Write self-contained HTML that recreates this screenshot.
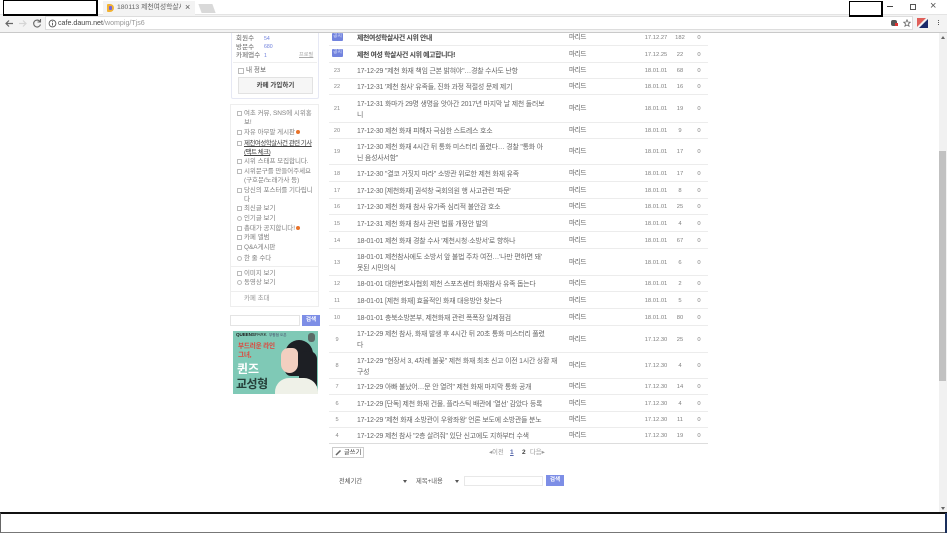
<!DOCTYPE html>
<html><head><meta charset="utf-8"><style>
html,body{margin:0;padding:0;background:#fff;width:947px;height:533px;overflow:hidden}
body{position:relative;font-family:"Liberation Sans","Noto Sans CJK KR",sans-serif;font-size:7px;color:#555}
.a{position:absolute;white-space:nowrap}
#w{position:absolute;left:0;top:0;width:947px;height:533px;filter:blur(.3px)}
.r{position:absolute;left:329px;width:379px;box-sizing:border-box;border-bottom:1px solid #ececec;display:flex;align-items:center;white-space:nowrap;color:#666}
.r span{display:block;flex:none;line-height:11px;position:relative;top:1px}
.r .no{width:16px;text-align:center;font-size:5.6px;color:#888}
.r .ti{margin-left:12px;width:205px;font-size:6.9px;letter-spacing:-.17px;color:#666}
.r .ti.b{font-weight:bold;letter-spacing:-.35px;color:#444;margin-left:28px}
.r .au{margin-left:7px;width:24px;font-size:6.6px;letter-spacing:-.4px;color:#666;top:0}
.r .da{margin-left:48px;width:30px;text-align:center;font-size:5.8px;color:#808080}
.r .vi{width:18px;text-align:center;font-size:5.8px;color:#808080}
.r .ze{width:20px;text-align:center;font-size:5.8px;color:#808080}
.m{position:absolute;left:244px;font-size:6.5px;line-height:9px;color:#808080;white-space:nowrap;letter-spacing:-.05px}
.m i{position:absolute;left:-7px;top:2px;width:3px;height:3px;border:1px solid #bbb;display:block}
.d{display:inline-block;width:4px;height:4px;background:#e8732a;border-radius:2px;margin-left:1px}
.n{position:absolute;left:332px;width:11px;height:8px;background:#7283de;color:#dfe4fb;font-size:4.8px;line-height:8px;text-align:center;border-radius:1px}
.k{position:absolute;left:236px;font-size:6.5px;line-height:9px;color:#666;letter-spacing:.1px}
.v{position:absolute;left:264px;font-size:5.2px;line-height:8px;color:#6f80dc}
</style></head><body>
<div id="w">

<div class="r" style="top:30px;height:16px"><span class="ti b">제천여성학살사건 시위 안내</span><span class="au">마리드</span><span class="da">17.12.27</span><span class="vi">182</span><span class="ze">0</span></div>
<div class="r" style="top:46px;height:17px"><span class="ti b">제천 여성 학살사건 시위 예고합니다!</span><span class="au">마리드</span><span class="da">17.12.25</span><span class="vi">22</span><span class="ze">0</span></div>
<div class="r" style="top:63px;height:16px"><span class="no">23</span><span class="ti">17-12-29 "제천 화재 책임 근본 밝혀야"…경찰 수사도 난항</span><span class="au">마리드</span><span class="da">18.01.01</span><span class="vi">68</span><span class="ze">0</span></div>
<div class="r" style="top:79px;height:16px"><span class="no">22</span><span class="ti">17-12-31 '제천 참사' 유족들, 진화 과정 적절성 문제 제기</span><span class="au">마리드</span><span class="da">18.01.01</span><span class="vi">16</span><span class="ze">0</span></div>
<div class="r" style="top:95px;height:28px"><span class="no">21</span><span class="ti">17-12-31 화마가 29명 생명을 앗아간 2017년 마지막 날 제천 둘러보<br>니</span><span class="au">마리드</span><span class="da">18.01.01</span><span class="vi">19</span><span class="ze">0</span></div>
<div class="r" style="top:123px;height:16px"><span class="no">20</span><span class="ti">17-12-30 제천 화재 피해자 극심한 스트레스 호소</span><span class="au">마리드</span><span class="da">18.01.01</span><span class="vi">9</span><span class="ze">0</span></div>
<div class="r" style="top:139px;height:26px"><span class="no">19</span><span class="ti">17-12-30 제천 화재 4시간 뒤 통화 미스터리 풀렸다… 경찰 "통화 아<br>닌 음성사서함"</span><span class="au">마리드</span><span class="da">18.01.01</span><span class="vi">17</span><span class="ze">0</span></div>
<div class="r" style="top:165px;height:17px"><span class="no">18</span><span class="ti">17-12-30 "결코 거짓지 마라" 소방관 위로한 제천 화재 유족</span><span class="au">마리드</span><span class="da">18.01.01</span><span class="vi">17</span><span class="ze">0</span></div>
<div class="r" style="top:182px;height:17px"><span class="no">17</span><span class="ti">17-12-30 [제천화재] 권석창 국회의원 행 사고관련 '파문'</span><span class="au">마리드</span><span class="da">18.01.01</span><span class="vi">8</span><span class="ze">0</span></div>
<div class="r" style="top:199px;height:16px"><span class="no">16</span><span class="ti">17-12-30 제천 화재 참사 유가족 심리적 불안감 호소</span><span class="au">마리드</span><span class="da">18.01.01</span><span class="vi">25</span><span class="ze">0</span></div>
<div class="r" style="top:215px;height:17px"><span class="no">15</span><span class="ti">17-12-31 제천 화재 참사 관련 법률 개정안 발의</span><span class="au">마리드</span><span class="da">18.01.01</span><span class="vi">4</span><span class="ze">0</span></div>
<div class="r" style="top:232px;height:17px"><span class="no">14</span><span class="ti">18-01-01 제천 화재 경찰 수사 '제천시청·소방서'로 향하나</span><span class="au">마리드</span><span class="da">18.01.01</span><span class="vi">67</span><span class="ze">0</span></div>
<div class="r" style="top:249px;height:27px"><span class="no">13</span><span class="ti">18-01-01 제천참사에도 소방서 앞 불법 주차 여전…'나만 편하면 돼'<br>못된 시민의식</span><span class="au">마리드</span><span class="da">18.01.01</span><span class="vi">6</span><span class="ze">0</span></div>
<div class="r" style="top:276px;height:16px"><span class="no">12</span><span class="ti">18-01-01 대한변호사협회 제천 스포츠센터 화재참사 유족 돕는다</span><span class="au">마리드</span><span class="da">18.01.01</span><span class="vi">2</span><span class="ze">0</span></div>
<div class="r" style="top:292px;height:17px"><span class="no">11</span><span class="ti">18-01-01 [제천 화재] 효율적인 화재 대응방안 찾는다</span><span class="au">마리드</span><span class="da">18.01.01</span><span class="vi">5</span><span class="ze">0</span></div>
<div class="r" style="top:309px;height:17px"><span class="no">10</span><span class="ti">18-01-01 충북소방본부, 제천화재 관련 폭폭장 일제점검</span><span class="au">마리드</span><span class="da">18.01.01</span><span class="vi">80</span><span class="ze">0</span></div>
<div class="r" style="top:326px;height:27px"><span class="no">9</span><span class="ti">17-12-29 제천 참사, 화재 발생 후 4시간 뒤 20초 통화 미스터리 풀렸<br>다</span><span class="au">마리드</span><span class="da">17.12.30</span><span class="vi">25</span><span class="ze">0</span></div>
<div class="r" style="top:353px;height:26px"><span class="no">8</span><span class="ti">17-12-29 "현장서 3, 4차례 불꽃" 제천 화재 최초 신고 이전 1시간 상황 재<br>구성</span><span class="au">마리드</span><span class="da">17.12.30</span><span class="vi">4</span><span class="ze">0</span></div>
<div class="r" style="top:379px;height:16px"><span class="no">7</span><span class="ti">17-12-29 아빠 불났어…문 안 열려" 제천 화재 마지막 통화 공개</span><span class="au">마리드</span><span class="da">17.12.30</span><span class="vi">14</span><span class="ze">0</span></div>
<div class="r" style="top:395px;height:17px"><span class="no">6</span><span class="ti">17-12-29 [단독] 제천 화재 건물, 플라스틱 배관에 '열선' 감았다 등록</span><span class="au">마리드</span><span class="da">17.12.30</span><span class="vi">4</span><span class="ze">0</span></div>
<div class="r" style="top:412px;height:16px"><span class="no">5</span><span class="ti">17-12-29 '제천 화재 소방관이 우왕좌왕' 언론 보도에 소방관들 분노</span><span class="au">마리드</span><span class="da">17.12.30</span><span class="vi">11</span><span class="ze">0</span></div>
<div class="r" style="top:428px;height:16px;border-bottom-color:#ddd"><span class="no">4</span><span class="ti">17-12-29 제천 참사 "2층 살려줘" 있단 신고에도 지하부터 수색</span><span class="au">마리드</span><span class="da">17.12.30</span><span class="vi">19</span><span class="ze">0</span></div>
<div class="n" style="top:33px">공지</div>
<div class="n" style="top:49px">공지</div>

<div class="a" style="left:0;top:0;width:947px;height:15px;background:#fff"></div>
<div class="a" style="left:0;top:14px;width:947px;height:18px;background:#f3f3f3;border-top:1px solid #e4e4e4;box-sizing:border-box"></div>
<div class="a" style="left:0;top:32px;width:947px;height:1px;background:#c9c9c9"></div>
<div class="a" style="left:103px;top:1px;width:92px;height:14px;background:#f3f3f3"></div>
<div class="a" style="left:107px;top:4px;width:7px;height:8px;background:#f2b233;border-radius:1px 4px 4px 1px"></div>
<div class="a" style="left:109px;top:6px;width:3px;height:4px;background:#7466d8;border-radius:1px"></div>
<div class="a" style="left:117px;top:3px;font-size:6.8px;line-height:9px;color:#666;width:64px;overflow:hidden">180113 제천여성학살사</div>
<div class="a" style="left:185px;top:2px;font-size:9px;line-height:11px;color:#555">×</div>
<div class="a" style="left:200px;top:4px;width:14px;height:9px;background:#d9d9d9;transform:skewX(20deg)"></div>
<div class="a" style="left:887px;top:6px;width:6px;height:1px;background:#444"></div>
<div class="a" style="left:910px;top:4px;width:4px;height:4px;border:1px solid #555;background:#fff"></div>
<div class="a" style="left:930px;top:0px;font-size:11px;line-height:12px;color:#555">×</div>

<svg class="a" style="left:4px;top:17px" width="24" height="13" viewBox="0 0 24 13"><path d="M9 6.500H2M5 3.500L2 6.500L5 9.500" fill="none" stroke="#666" stroke-width="1.200"/><path d="M15 6.500H22M19 3.500L22 6.500L19 9.500" fill="none" stroke="#d5d5d5" stroke-width="1.200"/></svg>
<svg class="a" style="left:32px;top:18px" width="10" height="11" viewBox="0 0 10 11"><path d="M8 3.500A3.500 3.500 0 1 0 8.500 6.500M8.500 1V4H5.500" fill="none" stroke="#666" stroke-width="1.100"/></svg>
<div class="a" style="left:45px;top:16px;width:868px;height:14px;background:#fff;border:1px solid #ddd;box-sizing:border-box"></div>
<svg class="a" style="left:48px;top:19px" width="9" height="9" viewBox="0 0 9 9"><circle cx="4.500" cy="4.500" r="3.400" fill="none" stroke="#555" stroke-width=".9"/><path d="M4.500 4V6.500M4.500 2.200V3.200" stroke="#555" stroke-width=".9"/></svg>
<div class="a" style="left:58px;top:19px;font-size:7.1px;line-height:9px;color:#999"><span style="color:#444">cafe.daum.net</span>/wompig/Tjs6</div>
<div class="a" style="left:891px;top:20px;width:6px;height:6px;background:#555;border-radius:2px"></div>
<div class="a" style="left:895px;top:23px;width:3px;height:3px;background:#d33"></div>
<svg class="a" style="left:903px;top:19px" width="8" height="8" viewBox="0 0 10 10"><path d="M5 1L6.200 3.800L9.200 4L6.900 6L7.600 9L5 7.400L2.400 9L3.100 6L.8 4L3.800 3.800Z" fill="none" stroke="#666" stroke-width="1"/></svg>
<svg class="a" style="left:917px;top:18px" width="11" height="10" viewBox="0 0 11 10"><rect width="11" height="10" fill="#f4f4f4"/><path d="M0 0H9L0 9Z" fill="#e0605a"/><path d="M11 1V10H2Z" fill="#1b2a6b"/></svg>
<div class="a" style="left:938px;top:20px;width:1px;height:1px;background:#555;box-shadow:0 2px #555,0 4px #555"></div>

<div class="a" style="left:939px;top:33px;width:8px;height:479px;background:#f1f1f1"></div>
<div class="a" style="left:939px;top:151px;width:7px;height:230px;background:#c1c1c1"></div>
<div class="a" style="left:941px;top:36px;width:0;height:0;border:2px solid transparent;border-bottom:3px solid #666;border-top:0"></div>
<div class="a" style="left:941px;top:507px;width:0;height:0;border:2px solid transparent;border-top:3px solid #666;border-bottom:0"></div>

<div class="a" style="left:231px;top:33px;width:88px;height:66px;box-sizing:border-box;border:1px solid #e6e8f4;border-top:0;border-radius:0 0 2px 2px"></div>
<div class="k" style="top:33.500px">회원수</div><div class="v" style="top:35px">54</div>
<div class="k" style="top:42.500px">방문수</div><div class="v" style="top:43px">680</div>
<div class="k" style="top:50.500px">카페앱수</div><div class="v" style="top:52px">1</div>
<div class="a" style="left:299px;top:51px;font-size:5.2px;line-height:8px;color:#aaa;text-decoration:underline">프로필</div>
<div class="a" style="left:233px;top:62px;width:84px;height:1px;background:#eee"></div>
<div class="a" style="left:238px;top:68px;width:4px;height:4px;border:1px solid #bbb"></div>
<div class="a" style="left:246px;top:66px;font-size:6.6px;line-height:9px;color:#666">내 정보</div>
<div class="a" style="left:238px;top:77px;width:75px;height:17px;box-sizing:border-box;background:#f6f6f6;border:1px solid #e2e2e2;text-align:center;font-size:6.5px;font-weight:bold;line-height:15px;color:#444">카페 가입하기</div>

<div class="a" style="left:230px;top:104px;width:89px;height:203px;box-sizing:border-box;border:1px solid #eee"></div>
<div class="m" style="top:109px"><i></i>여초 커뮤, SNS에 시위홍<br>보!</div>
<div class="m" style="top:128px"><i></i>자유 아무말 게시판<b class="d"></b></div>
<div class="m" style="top:139px;color:#444;text-decoration:underline;letter-spacing:-.55px"><i></i>제천여성학살사건 관련 기사<br>(팩트 체크)</div>
<div class="m" style="top:157px"><i></i>시위 스태프 모집합니다.</div>
<div class="m" style="top:167px"><i></i>시위문구를 만들어주세요<br>(구호문/노래가사 등)</div>
<div class="m" style="top:186px"><i></i>당신의 포스터를 기다립니<br>다</div>
<div class="m" style="top:204px"><i></i>최신글 보기</div>
<div class="m" style="top:214px"><i style="border-radius:3px"></i>인기글 보기</div>
<div class="m" style="top:224px"><i></i>총대가 공지합니다!<b class="d"></b></div>
<div class="m" style="top:233px"><i></i>카페 앨범</div>
<div class="m" style="top:243px"><i></i>Q&amp;A게시판</div>
<div class="m" style="top:254px"><i style="border-radius:3px"></i>한 줄 수다</div>
<div class="a" style="left:231px;top:266px;width:87px;height:1px;background:#eee"></div>
<div class="m" style="top:269px"><i></i>이미지 보기</div>
<div class="m" style="top:278px"><i style="border-radius:3px"></i>동영상 보기</div>
<div class="a" style="left:231px;top:291px;width:87px;height:1px;background:#eee"></div>
<div class="m" style="top:294px;color:#999">카페 초대</div>

<div class="a" style="left:230px;top:315px;width:70px;height:11px;box-sizing:border-box;border:1px solid #e4e4e4"></div>
<div class="a" style="left:302px;top:315px;width:18px;height:11px;background:#7d8ee6;color:#fff;font-size:5.6px;line-height:11px;text-align:center;font-weight:bold">검색</div>

<div class="a" style="left:233px;top:331px;width:85px;height:63px;background:#7fc9b6;overflow:hidden">
<div class="a" style="left:3px;top:0px;font-size:4.6px;line-height:8px;font-weight:bold;color:#222;letter-spacing:-.1px">QUEENS<span style="font-weight:normal">PARK</span></div>
<div class="a" style="left:36px;top:1px;font-size:3.6px;line-height:6px;color:#446">부평점 오픈</div>
<div class="a" style="left:5px;top:11px;font-size:6.6px;line-height:9px;font-weight:bold;color:#e0443a;letter-spacing:-.2px">부드러운 라인<br>그녀,</div>
<div class="a" style="left:4px;top:31px;font-size:12px;line-height:14px;font-weight:bold;color:#fff">퀸즈</div>
<div class="a" style="left:3px;top:46px;font-size:12px;line-height:14px;font-weight:bold;color:#26403a;letter-spacing:-.5px">교성형</div>
<div class="a" style="left:52px;top:9px;width:28px;height:36px;background:#1d1f24;border-radius:14px 14px 6px 6px"></div>
<div class="a" style="left:48px;top:17px;width:17px;height:25px;background:#f2cfc0;border-radius:8px 6px 9px 9px"></div>
<div class="a" style="left:66px;top:20px;width:18px;height:36px;background:#1d1f24;border-radius:8px 8px 0 0"></div>
<div class="a" style="left:42px;top:47px;width:43px;height:16px;background:#eff1e8;border-radius:14px 14px 0 0"></div>
<div class="a" style="left:75px;top:2px;width:7px;height:9px;background:#5b6a66;border-radius:3px"></div>
</div>

<div class="a" style="left:332px;top:447px;width:32px;height:11px;box-sizing:border-box;border:1px solid #ccc;font-size:6.3px;line-height:9px;color:#444;padding-left:11px">글쓰기</div>
<svg class="a" style="left:335px;top:449px" width="7" height="7" viewBox="0 0 7 7"><path d="M1 6L5.500 1.500" stroke="#666" stroke-width="1.500"/></svg>
<div class="a" style="left:489px;top:448px;font-size:6.3px;line-height:9px;color:#999">◂이전</div>
<div class="a" style="left:510px;top:448px;font-size:6.5px;line-height:9px;color:#5566aa;text-decoration:underline;font-weight:bold">1</div>
<div class="a" style="left:522px;top:448px;font-size:6.5px;line-height:9px;color:#444;font-weight:bold">2</div>
<div class="a" style="left:530px;top:448px;font-size:6.3px;line-height:9px;color:#999">다음▸</div>

<div class="a" style="left:339px;top:477px;font-size:6.3px;line-height:9px;color:#555">전체기간</div>
<div class="a" style="left:403px;top:480px;width:0;height:0;border:2px solid transparent;border-top:3px solid #555;border-bottom:0"></div>
<div class="a" style="left:416px;top:477px;font-size:6.3px;line-height:9px;color:#555">제목+내용</div>
<div class="a" style="left:455px;top:480px;width:0;height:0;border:2px solid transparent;border-top:3px solid #555;border-bottom:0"></div>
<div class="a" style="left:464px;top:476px;width:79px;height:10px;box-sizing:border-box;border:1px solid #e8e8e8"></div>
<div class="a" style="left:546px;top:475px;width:18px;height:11px;background:#7d8ee6;color:#fff;font-size:5.6px;line-height:11px;text-align:center;font-weight:bold">검색</div>
</div>

<div class="a" style="left:3px;top:0;width:95px;height:16px;box-sizing:border-box;background:#fff;border:1px solid #000;border-width:1px 2px 2px 1px"></div>
<div class="a" style="left:849px;top:1px;width:34px;height:16px;box-sizing:border-box;background:#fff;border:1px solid #000;border-width:1px 2px 2px 1px"></div>
<div class="a" style="left:0;top:512px;width:947px;height:21px;box-sizing:border-box;background:#fff;border-top:2px solid #111;border-left:1px solid #666;border-right:1px solid #111;border-bottom:1px solid #777"></div>
<div class="a" style="left:945px;top:513px;width:2px;height:20px;background:#1a2f5c"></div>
</body></html>
